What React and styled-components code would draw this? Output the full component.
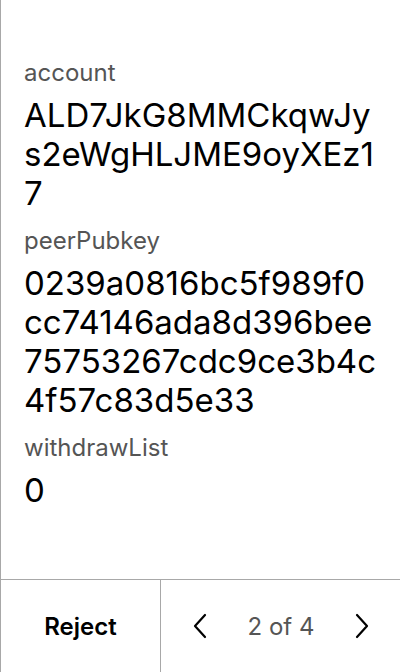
import React from 'react';
import styled, {createGlobalStyle} from 'styled-components';

const GlobalStyle = createGlobalStyle`
  html, body {
    margin: 0;
    padding: 0;
    background: #fff;
  }
  body {
    font-family: Inter, "Noto Sans", sans-serif;
    color: #000;
  }
`;

const fields = [
    {label: 'account', value: 'ALD7JkG8MMCkqwJys2eWgHLJME9oyXEz17'},
    {label: 'peerPubkey', value: '0239a0816bc5f989f0cc74146ada8d396bee75753267cdc9ce3b4c4f57c83d5e33'},
    {label: 'withdrawList', value: '0'},
];

const Chevron = ({dir}) => (
    <svg width="14" height="26" viewBox="0 0 14 26" fill="none">
        {dir === 'left'
            ? <path d="M12 2 L2 13 L12 24" stroke="#000" strokeWidth="2.2" strokeLinecap="round" strokeLinejoin="round" />
            : <path d="M2 2 L12 13 L2 24" stroke="#000" strokeWidth="2.2" strokeLinecap="round" strokeLinejoin="round" />}
    </svg>
);

const App = () => {
    return (
        <>
            <GlobalStyle />
            <Screen>
                <Body>
                    {fields.map((f) => (
                        <Field key={f.label}>
                            <Label>{f.label}</Label>
                            <Value>{f.value}</Value>
                        </Field>
                    ))}
                </Body>
                <Footer>
                    <RejectButton>Reject</RejectButton>
                    <Pager>
                        <NavButton><Chevron dir="left" /></NavButton>
                        <PageText>2 of 4</PageText>
                        <NavButton><Chevron dir="right" /></NavButton>
                    </Pager>
                </Footer>
            </Screen>
        </>
    );
};

const Screen = styled.div`
    height: 672px;
    display: flex;
    flex-direction: column;
    border-left: 1px solid #a8a8a8;
    box-sizing: border-box;
`;
const Body = styled.div`
    flex: 1;
    padding: 58px 23px 0 23px;
`;
const Field = styled.div`
    margin-bottom: 13px;
`;
const Label = styled.div`
    font-size: 24px;
    line-height: 29px;
    color: #555;
    margin-bottom: 9px;
`;
const Value = styled.div`
    font-size: 33px;
    line-height: 39px;
    color: #000;
    word-break: break-all;
`;
const Footer = styled.div`
    height: 92px;
    display: flex;
    border-top: 1px solid #a8a8a8;
`;
const RejectButton = styled.div`
    width: 159px;
    display: flex;
    align-items: center;
    justify-content: center;
    font-size: 24px;
    font-weight: 600;
    border-right: 1px solid #a8a8a8;
`;
const Pager = styled.div`
    flex: 1;
    display: flex;
    align-items: center;
    justify-content: space-between;
    padding: 0 31px 0 32px;
`;
const NavButton = styled.div`
    display: flex;
    align-items: center;
`;
const PageText = styled.div`
    font-size: 24px;
    color: #555;
`;

export default App;
